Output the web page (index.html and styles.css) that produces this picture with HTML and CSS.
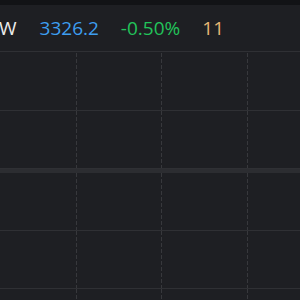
FILE: index.html
```html
<!DOCTYPE html>
<html>

<head>
    <title>Ticker Chart</title>
    <link rel="stylesheet" href="styles.css">
</head>

<body>
    <div class="topbar"></div>
    <div class="ticker">
        <span class="sym">W</span>
        <span class="price">3326.2</span>
        <span class="change">-0.50%</span>
        <span class="count">11</span>
    </div>
    <div class="chart">
        <div class="panel">
            <div class="row"><div class="cell"></div><div class="cell"></div><div class="cell"></div><div class="cell"></div></div>
            <div class="row"><div class="cell"></div><div class="cell"></div><div class="cell"></div><div class="cell"></div></div>
        </div>
        <div class="divider"></div>
        <div class="panel">
            <div class="row"><div class="cell"></div><div class="cell"></div><div class="cell"></div><div class="cell"></div></div>
            <div class="row"><div class="cell"></div><div class="cell"></div><div class="cell"></div><div class="cell"></div></div>
            <div class="row last"><div class="cell"></div><div class="cell"></div><div class="cell"></div><div class="cell"></div></div>
        </div>
    </div>
</body>

</html>
```

FILE: styles.css
```css
body {
    margin: 0;
    padding: 0;
    height: 300px;
    background-color: #1e1f23;
    font-family: "Open Sans", "Noto Sans", sans-serif;
    overflow: hidden;
}

.topbar {
    height: 5px;
    background-color: #121316;
}

.ticker {
    height: 47px;
    display: flex;
    align-items: center;
    gap: 22px;
    font-size: 19px;
    border-bottom: 1px solid #2f3034;
    box-sizing: border-box;
    white-space: nowrap;
}

.sym {
    color: #ececec;
    margin-left: -1px;
}

.price {
    color: #3d9ef0;
    margin-left: 1px;
}

.change {
    color: #22c35a;
}

.count {
    color: #e6b774;
}

.chart {
    height: 248px;
    padding-top: 1px;
    overflow: hidden;
}

.row {
    display: grid;
    grid-template-columns: 77px 85px 86px 1fr;
    height: 58px;
    border-bottom: 1px solid #2f3034;
    box-sizing: border-box;
}

.row.last {
    border-bottom: none;
}

.cell {
    background-image: repeating-linear-gradient(to bottom, #37383c 0 4px, transparent 4px 6px);
    background-size: 1px 100%;
    background-position: right top;
    background-repeat: no-repeat;
}

.cell:last-child {
    background-image: none;
}

.divider {
    height: 4px;
    background-color: #2c2d31;
}
```
